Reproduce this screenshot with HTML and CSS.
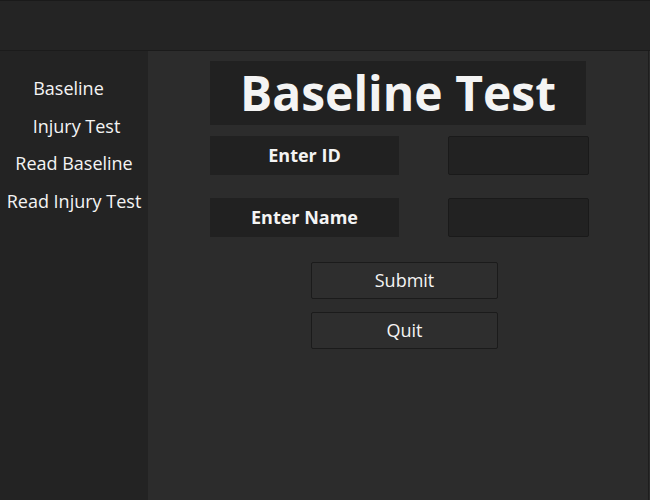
FILE: index.html
```html
<!DOCTYPE html>
<html>
<head>
<meta charset="utf-8">
<link rel="stylesheet" href="styles.css">
</head>
<body>
<div class="window">
  <div class="topbar"></div>
  <div class="content">
    <nav class="sidebar">
      <div class="nav-item nav-a">Baseline</div>
      <div class="nav-item nav-b">Injury Test</div>
      <div class="nav-item">Read Baseline</div>
      <div class="nav-item">Read Injury Test</div>
    </nav>
    <main class="main">
      <div class="title">Baseline Test</div>
      <div class="form">
        <div class="row">
          <div class="label">Enter ID</div>
          <div class="input"></div>
        </div>
        <div class="row">
          <div class="label">Enter Name</div>
          <div class="input"></div>
        </div>
      </div>
      <div class="buttons">
        <div class="btn">Submit</div>
        <div class="btn">Quit</div>
      </div>
    </main>
  </div>
</div>
</body>
</html>
```
FILE: styles.css
```css
html, body {
  margin: 0;
  padding: 0;
  background: #2c2c2c;
}
.window {
  width: 650px;
  height: 500px;
  display: flex;
  flex-direction: column;
  font-family: "Open Sans", "Noto Sans", sans-serif;
  color: #f4f4f4;
  overflow: hidden;
}
.topbar {
  height: 49px;
  background: #242424;
  border-top: 1px solid #1a1a1a;
  border-bottom: 1px solid #1b1b1b;
  flex: none;
}
.content {
  flex: 1;
  display: flex;
}
.sidebar {
  width: 148px;
  background: #232323;
  padding-top: 19px;
  box-sizing: border-box;
}
.nav-item {
  height: 37.5px;
  line-height: 37.5px;
  text-align: center;
  font-size: 18px;
  white-space: nowrap;
}
.nav-a {
  padding-right: 11px;
}
.nav-b {
  padding-left: 5px;
}
.main {
  flex: 1;
  background: #2c2c2c;
  border-right: 1px solid #1e1e1e;
  margin-right: 1px;
  padding-top: 10px;
  padding-left: 62px;
}
.title {
  width: 376px;
  height: 64px;
  background: #212121;
  font-size: 48px;
  font-weight: 700;
  line-height: 64px;
  text-align: center;
}
.form {
  display: flex;
  flex-direction: column;
  gap: 23px;
  margin-top: 11px;
}
.row {
  display: flex;
  gap: 49px;
}
.label {
  width: 189px;
  height: 39px;
  background: #212121;
  font-weight: 700;
  font-size: 18px;
  line-height: 39px;
  text-align: center;
}
.input {
  width: 139px;
  height: 37px;
  background: #222222;
  border: 1px solid #1a1a1a;
  border-radius: 2px;
}
.buttons {
  display: flex;
  flex-direction: column;
  gap: 13px;
  margin-top: 25px;
  margin-left: 101px;
}
.btn {
  width: 185px;
  height: 35px;
  background: #2e2e2e;
  border: 1px solid #1b1b1b;
  border-radius: 2px;
  font-size: 18px;
  line-height: 35px;
  text-align: center;
}
```
